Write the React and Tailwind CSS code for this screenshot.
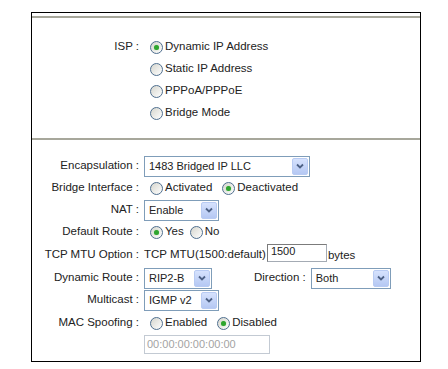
import React from 'react';

const Radio = ({ checked }) => (
  <span className="ml-[6px] mr-[2px] w-[13px] h-[13px] shrink-0 rounded-full border border-[#4f6f8f] bg-gradient-to-br from-[#d6d6ce] to-[#ffffff] flex items-center justify-center">
    {checked && <span className="w-[5px] h-[5px] rounded-full bg-[#2fa52f] shadow-[0_0_1px_#7fd07f]"></span>}
  </span>
);

const Select = ({ value, width }) => (
  <div className={`${width} h-[21px] border border-[#7f9db9] bg-white flex items-stretch text-[11px]`}>
    <span className="flex-1 pl-[4px] flex items-center whitespace-nowrap">{value}</span>
    <span className="w-[16px] m-[1px] rounded-[2px] border border-[#b8cbf3] bg-gradient-to-b from-[#d6e2fd] to-[#b5c8f3] flex items-center justify-center">
      <svg width="8" height="6" viewBox="0 0 8 6">
        <path d="M1 1.5 L4 4.5 L7 1.5" fill="none" stroke="#4d6185" strokeWidth="1.8" />
      </svg>
    </span>
  </div>
);

const Label = ({ children }) => (
  <span className="w-[107px] shrink-0 text-right whitespace-nowrap">{children}</span>
);

const Row = ({ label, h = 'h-[22px]', children }) => (
  <div className={`flex items-center ${h}`}>
    <Label>{label}</Label>
    <div className="ml-[5px] flex items-center">{children}</div>
  </div>
);

const App = () => {
  const isp = ['Dynamic IP Address', 'Static IP Address', 'PPPoA/PPPoE', 'Bridge Mode'];

  return (
    <div className="min-h-screen bg-white pt-[12px] pl-[31px] font-['Liberation_Sans',Arial,sans-serif] text-[11.5px] text-[#222]">
      <div className="w-[390px] border border-black">
        <div className="h-[3px]"></div>
        <div className="h-[2px] bg-[#a7a79b]"></div>

        {/* ISP choice */}
        <div className="pt-[18px] pb-[14px]">
          {isp.map((item, i) => (
            <div key={item} className="flex items-center h-[22px]">
              <Label>{i === 0 ? 'ISP :' : ''}</Label>
              <div className="ml-[5px] flex items-center">
                <Radio checked={i === 0} />
                <span>{item}</span>
              </div>
            </div>
          ))}
        </div>

        <div className="h-[2px] bg-[#a7a79b]"></div>

        {/* connection settings */}
        <div className="pt-[15px] pb-[7px]">
          <Row label="Encapsulation :">
            <Select value="1483 Bridged IP LLC" width="w-[166px]" />
          </Row>
          <Row label="Bridge Interface :">
            <Radio />
            <span>Activated</span>
            <span className="w-[4px]"></span>
            <Radio checked />
            <span>Deactivated</span>
          </Row>
          <Row label="NAT :">
            <Select value="Enable" width="w-[75px]" />
          </Row>
          <Row label="Default Route :">
            <Radio checked />
            <span>Yes</span>
            <span className="w-[0px]"></span>
            <Radio />
            <span>No</span>
          </Row>
          <Row label="TCP MTU Option :" h="h-[24px]">
            <span className="whitespace-nowrap">TCP MTU(1500:default)</span>
            <span className="ml-[1px] mb-[4px] w-[60px] h-[18px] border border-[#a4abb4] border-t-[#7b7b7b] border-l-[#7b7b7b] pl-[3px] leading-[12px] text-[11px]">1500</span>
            <span className="ml-[1px] mt-[2px]">bytes</span>
          </Row>
          <Row label="Dynamic Route :">
            <Select value="RIP2-B" width="w-[68px]" />
            <span className="ml-[42px] whitespace-nowrap">Direction :</span>
            <span className="ml-[5px]">
              <Select value="Both" width="w-[80px]" />
            </span>
          </Row>
          <Row label="Multicast :">
            <Select value="IGMP v2" width="w-[75px]" />
          </Row>
          <Row label="MAC Spoofing :" h="h-[24px]">
            <Radio />
            <span>Enabled</span>
            <span className="w-[4px]"></span>
            <Radio checked />
            <span>Disabled</span>
          </Row>
          <div className="flex items-center h-[19px]">
            <span className="w-[107px] shrink-0"></span>
            <span className="ml-[5px] w-[126px] h-[19px] border border-[#c3cad3] pl-[2px] flex items-center text-[11px] text-[#a3a3a3]">
              00:00:00:00:00:00
            </span>
          </div>
        </div>
      </div>
    </div>
  );
};

export default App;
